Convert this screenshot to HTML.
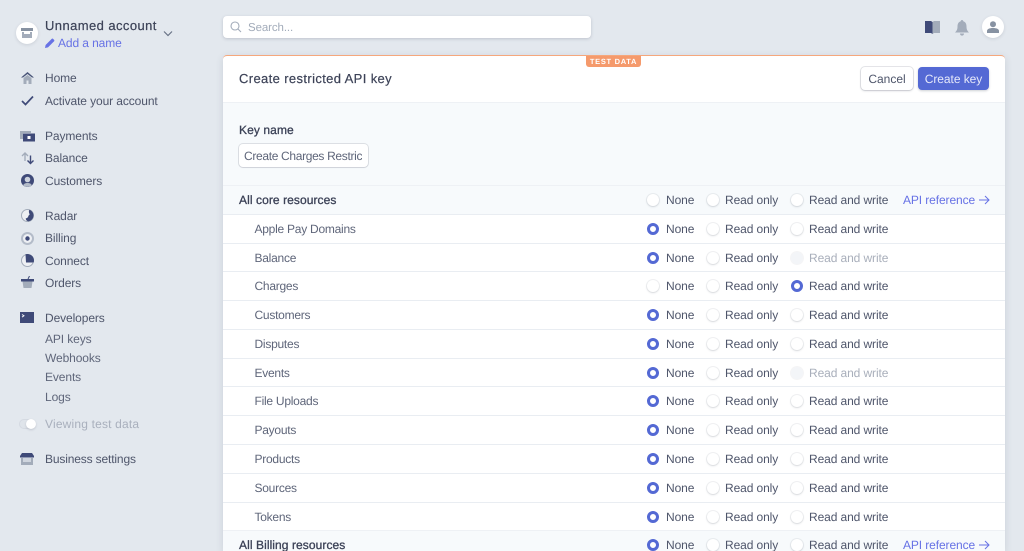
<!DOCTYPE html>
<html lang="en"><head><meta charset="utf-8"><title>Create restricted API key</title>
<style>
*{box-sizing:border-box}
html,body{margin:0;width:1024px;height:551px;overflow:hidden;background:#e3e8ee;font-family:"Liberation Sans",sans-serif;color:#4f566b}
#page{position:relative;width:1024px;height:551px;overflow:hidden;background:#e3e8ee;text-rendering:geometricPrecision}
.t{position:absolute;white-space:nowrap;font-size:12px;line-height:16px;letter-spacing:-.1px}
.nav{color:#4f566b;left:45px}
.sub{color:#5f667a;left:45px}
svg{position:absolute;display:block}
#card{position:absolute;left:223px;top:55px;width:782px;height:496px;background:#fff;border-top:1px solid #f5a77c;border-radius:4px 4px 0 0;box-shadow:0 2px 8px rgba(60,66,87,.14)}
.row{position:absolute;left:0;width:782px;height:29px;border-top:1px solid #e9edf2;background:#fff}
.row.h{background:#f7fafc;border-top:1px solid #eef1f5}
.row .t{top:6px}
.l{left:31.500px;color:#5f667a;letter-spacing:-.25px}
.row.h .l{left:16px;color:#3c4257;-webkit-text-stroke:.3px #3c4257;letter-spacing:.08px}
.x{left:443px}.y{left:502px}.z{left:586px}
.row i{position:absolute;top:8px;width:12px;height:12px;border-radius:50%;background:#fff;box-shadow:0 0 0 1px rgba(60,66,87,.07),0 1px 2px rgba(60,66,87,.14)}
.a{left:424px}.b{left:484px}.c{left:568px}
.row i.on{background:#fff;border:3.500px solid #5469d4;box-shadow:none}
.row i.off{background:#f3f5f8;box-shadow:0 0 0 1px rgba(60,66,87,.05)}
.dis{color:#a9afbb}
.ref{left:680px;color:#6772e5}
.row svg{left:756px;top:9px}
.lab{-webkit-text-stroke:.3px #3c4257;letter-spacing:.1px}
</style></head><body><div id="page">

<!-- account -->
<div style="position:absolute;left:16px;top:22px;width:22px;height:22px;border-radius:50%;background:#fff;box-shadow:0 1px 3px rgba(60,66,87,.15)"></div>
<svg style="left:21px;top:27px" width="12" height="12" viewBox="0 0 12 12"><path d="M0 1h12v3H0z" fill="#8792a2"/><path d="M1 5h10v6H1z" fill="#a3acba"/><path d="M3 5h6v2H3z" fill="#fff"/></svg>
<div class="t" style="left:45px;top:18px;font-size:13px;color:#3c4257;letter-spacing:.42px;-webkit-text-stroke:.2px #3c4257">Unnamed account</div>
<svg style="left:45px;top:38px" width="10" height="10" viewBox="0 0 10 10"><path d="M0 10l.6-3L6.700.9a1 1 0 0 1 1.400 0l1 1a1 1 0 0 1 0 1.400L3 9.400z" fill="#6772e5"/></svg>
<div class="t" style="left:58px;top:35px;color:#6772e5">Add a name</div>
<svg style="left:163px;top:30px" width="10" height="8" viewBox="0 0 10 8"><path d="M1 1.500l4 4 4-4" fill="none" stroke="#697386" stroke-width="1.200"/></svg>

<!-- nav -->
<svg style="left:21px;top:72px" width="13" height="12" viewBox="0 0 13 12"><path d="M6.500 0L13 5.500H11L6.500 2 2 5.500H0z" fill="#4a5578"/><path d="M2.500 6L6.500 3l4 3v6h-3V8.500h-2V12h-3z" fill="#a3acba"/></svg>
<div class="t nav" style="top:70px">Home</div>
<svg style="left:21px;top:95px" width="13" height="11" viewBox="0 0 13 11"><path d="M1 6l3.500 3.500L12 1.500" fill="none" stroke="#3f4a78" stroke-width="1.700"/></svg>
<div class="t nav" style="top:93px">Activate your account</div>

<svg style="left:20px;top:131px" width="15" height="11" viewBox="0 0 15 11"><path d="M0 0h11v2H3v6H0z" fill="#a3acba"/><path d="M3 2.500h12V10.500H3z" fill="#3f4a78"/><path d="M7.500 5h3v3h-3z" fill="#fff"/></svg>
<div class="t nav" style="top:128px">Payments</div>
<svg style="left:21px;top:152px" width="14" height="13" viewBox="0 0 14 13"><path d="M4 9V1M1 4l3-3 3 3" fill="none" stroke="#a3acba" stroke-width="1.400"/><path d="M9.500 3.500v8M6.500 8.500l3 3 3-3" fill="none" stroke="#3f4a78" stroke-width="1.400"/></svg>
<div class="t nav" style="top:150px">Balance</div>
<svg style="left:21px;top:174px" width="13" height="13" viewBox="0 0 13 13"><circle cx="6.500" cy="6.500" r="6.500" fill="#3f4a78"/><path d="M2.200 11.300C3 9.500 4.600 9 6.500 9s3.500.5 4.300 2.300A6.500 6.500 0 0 1 2.200 11.300z" fill="#b4bcc9"/><circle cx="6.500" cy="5.500" r="2.800" fill="#cdd3dd"/></svg>
<div class="t nav" style="top:173px">Customers</div>

<svg style="left:21px;top:209px" width="13" height="13" viewBox="0 0 13 13"><circle cx="6.500" cy="6.500" r="6" fill="#eef0f4" stroke="#a3acba" stroke-width="1"/><path d="M8.500 .8A6 6 0 0 1 8 12.300C6.200 12.500 4.600 11 4.800 9.300 7.500 9.500 7 6 8.800 5.500 7.800 4 7.500 2 8.500 .8z" fill="#3f4a78"/></svg>
<div class="t nav" style="top:208px">Radar</div>
<svg style="left:21px;top:232px" width="13" height="13" viewBox="0 0 13 13"><circle cx="6.500" cy="6.500" r="6.500" fill="#b4bcc9"/><circle cx="6.500" cy="6.500" r="4.500" fill="#eef0f4"/><circle cx="6.500" cy="6.500" r="2.200" fill="#3f4a78"/></svg>
<div class="t nav" style="top:230px">Billing</div>
<svg style="left:21px;top:254px" width="13" height="13" viewBox="0 0 13 13"><circle cx="6.500" cy="6.500" r="6" fill="#eef0f4" stroke="#a3acba"/><path d="M4.500 .3A6.500 6.500 0 0 1 13 6.500C13 7.500 12.800 8 12.500 8.500H5z" fill="#3f4a78"/></svg>
<div class="t nav" style="top:253px">Connect</div>
<svg style="left:21px;top:276px" width="13" height="12" viewBox="0 0 13 12"><path d="M0 3h13v2.500H0z" fill="#3f4a78"/><path d="M1.500 5.500h10L10.500 12h-8z" fill="#a3acba"/><path d="M7 3l1.500-3" stroke="#3f4a78" stroke-width="1"/></svg>
<div class="t nav" style="top:275px">Orders</div>

<svg style="left:20px;top:312px" width="14" height="11" viewBox="0 0 14 11"><path d="M0 0h14v11H0z" fill="#3f4a78"/><path d="M2 2.500l2 1.300-2 1.300" fill="none" stroke="#fff" stroke-width=".9"/></svg>
<div class="t nav" style="top:310px">Developers</div>
<div class="t sub" style="top:331px">API keys</div>
<div class="t sub" style="top:350px">Webhooks</div>
<div class="t sub" style="top:369px">Events</div>
<div class="t sub" style="top:389px">Logs</div>

<div style="position:absolute;left:19px;top:419px;width:17px;height:10px;border-radius:5px;background:#dfe4ea;box-shadow:inset 0 0 0 1px #d5dae2"></div>
<div style="position:absolute;left:26px;top:419px;width:10px;height:10px;border-radius:50%;background:#fff;box-shadow:0 1px 2px rgba(60,66,87,.2)"></div>
<div class="t" style="left:45px;top:416px;color:#a9b0bd;letter-spacing:.18px">Viewing test data</div>

<svg style="left:20px;top:453px" width="14" height="12" viewBox="0 0 14 12"><path d="M2 0h10l2 3v1.500H0V3z" fill="#3f4a78"/><path d="M1 5h12v7H1z" fill="#a3acba"/><path d="M3 5h8v4H3z" fill="#cfd5de"/></svg>
<div class="t nav" style="top:451px;letter-spacing:-.15px">Business settings</div>

<!-- search -->
<div style="position:absolute;left:223px;top:16px;width:368px;height:22px;background:#fff;border-radius:4px;box-shadow:0 1px 3px rgba(60,66,87,.22)"></div>
<svg style="left:230px;top:21px" width="12" height="12" viewBox="0 0 12 12"><circle cx="5" cy="5" r="4" fill="none" stroke="#a3acba" stroke-width="1.100"/><path d="M8 8l3 3" stroke="#a3acba" stroke-width="1.100"/></svg>
<div class="t" style="left:248px;top:20px;color:#a3acba;font-size:11.500px">Search...</div>

<!-- top icons -->
<svg style="left:925px;top:21px" width="15" height="13" viewBox="0 0 15 13"><path d="M0 0h6l1.500 1v12L6 12H0z" fill="#3f4a78"/><path d="M15 0H9L7.500 1v12L9 12h6z" fill="#a3acba"/></svg>
<svg style="left:955px;top:20px" width="14" height="16" viewBox="0 0 14 16"><path d="M7 0c.8 0 1.200.5 1.300 1.300C10.500 2 11.500 4 11.500 6.500c0 3 .8 4.300 2.500 6H0c1.700-1.700 2.500-3 2.500-6C2.500 4 3.500 2 5.700 1.300 5.800.5 6.200 0 7 0z" fill="#a3acba"/><path d="M5 13.500h4C9 15 8 15.600 7 15.600S5 15 5 13.500z" fill="#a3acba"/></svg>
<div style="position:absolute;left:982px;top:16px;width:22px;height:22px;border-radius:50%;background:#fff;box-shadow:0 1px 3px rgba(60,66,87,.15)"></div>
<svg style="left:987px;top:21px" width="12" height="12" viewBox="0 0 12 12"><circle cx="6" cy="3.200" r="3" fill="#8792a2"/><path d="M0 12v-2c0-2 2.500-3 6-3s6 1 6 3v2z" fill="#8792a2"/></svg>

<!-- card -->
<div id="card">
  <div style="position:absolute;left:363px;top:0;width:55px;height:11px;background:#f59a6c;border-radius:0 0 3px 3px;color:#fff;font-size:7.500px;font-weight:bold;line-height:11px;text-align:center;letter-spacing:.7px">TEST DATA</div>
  <div class="t" style="left:16px;top:15px;font-size:13px;color:#3c4257;letter-spacing:.37px;-webkit-text-stroke:.2px #3c4257">Create restricted API key</div>
  <div style="position:absolute;left:638px;top:11px;width:52px;height:23px;background:#fff;border-radius:4px;box-shadow:0 0 0 1px rgba(60,66,87,.12),0 1px 2px rgba(60,66,87,.2);color:#4f566b;font-size:12px;line-height:24px;text-align:center;letter-spacing:0">Cancel</div>
  <div style="position:absolute;left:695px;top:11px;width:71px;height:23px;background:#5469d4;border-radius:4px;box-shadow:0 1px 2px rgba(60,66,87,.25);font-size:12px;line-height:24px;text-align:center;letter-spacing:-.05px;color:#e6e9fa">Create key</div>

  <div style="position:absolute;left:0;top:46px;width:782px;height:84px;background:#f7fafc;border-top:1px solid #eef1f5"></div>
  <div class="t lab" style="left:16px;top:66px;color:#3c4257">Key name</div>
  <div style="position:absolute;left:16px;top:88px;width:129px;height:23px;background:#fff;border-radius:4px;box-shadow:0 0 0 1px rgba(60,66,87,.14),0 1px 1px rgba(60,66,87,.08)"><div class="t" style="left:5px;top:4px;width:118px;overflow:hidden;color:#5f667a;letter-spacing:-.33px">Create Charges Restric</div></div>

  <div class="row h" style="top:129px"><span class="t l">All core resources</span><i class="a"></i><span class="t x">None</span><i class="b"></i><span class="t y">Read only</span><i class="c"></i><span class="t z">Read and write</span><span class="t ref">API reference</span><svg width="11" height="10" viewBox="0 0 11 10"><path d="M0 5h10M6 1l4 4-4 4" fill="none" stroke="#6772e5" stroke-width="1"/></svg></div>
  <div class="row" style="top:158px"><span class="t l">Apple Pay Domains</span><i class="a on"></i><span class="t x">None</span><i class="b"></i><span class="t y">Read only</span><i class="c"></i><span class="t z">Read and write</span></div>
  <div class="row" style="top:186.600px"><span class="t l">Balance</span><i class="a on"></i><span class="t x">None</span><i class="b"></i><span class="t y">Read only</span><i class="c off"></i><span class="t z dis">Read and write</span></div>
  <div class="row" style="top:215.300px"><span class="t l">Charges</span><i class="a"></i><span class="t x">None</span><i class="b"></i><span class="t y">Read only</span><i class="c on"></i><span class="t z">Read and write</span></div>
  <div class="row" style="top:244.200px"><span class="t l">Customers</span><i class="a on"></i><span class="t x">None</span><i class="b"></i><span class="t y">Read only</span><i class="c"></i><span class="t z">Read and write</span></div>
  <div class="row" style="top:273.100px"><span class="t l">Disputes</span><i class="a on"></i><span class="t x">None</span><i class="b"></i><span class="t y">Read only</span><i class="c"></i><span class="t z">Read and write</span></div>
  <div class="row" style="top:301.800px"><span class="t l">Events</span><i class="a on"></i><span class="t x">None</span><i class="b"></i><span class="t y">Read only</span><i class="c off"></i><span class="t z dis">Read and write</span></div>
  <div class="row" style="top:330.400px"><span class="t l">File Uploads</span><i class="a on"></i><span class="t x">None</span><i class="b"></i><span class="t y">Read only</span><i class="c"></i><span class="t z">Read and write</span></div>
  <div class="row" style="top:359.400px"><span class="t l">Payouts</span><i class="a on"></i><span class="t x">None</span><i class="b"></i><span class="t y">Read only</span><i class="c"></i><span class="t z">Read and write</span></div>
  <div class="row" style="top:388.200px"><span class="t l">Products</span><i class="a on"></i><span class="t x">None</span><i class="b"></i><span class="t y">Read only</span><i class="c"></i><span class="t z">Read and write</span></div>
  <div class="row" style="top:416.900px"><span class="t l">Sources</span><i class="a on"></i><span class="t x">None</span><i class="b"></i><span class="t y">Read only</span><i class="c"></i><span class="t z">Read and write</span></div>
  <div class="row" style="top:445.700px"><span class="t l">Tokens</span><i class="a on"></i><span class="t x">None</span><i class="b"></i><span class="t y">Read only</span><i class="c"></i><span class="t z">Read and write</span></div>
  <div class="row h" style="top:474.300px"><span class="t l">All Billing resources</span><i class="a on"></i><span class="t x">None</span><i class="b"></i><span class="t y">Read only</span><i class="c"></i><span class="t z">Read and write</span><span class="t ref">API reference</span><svg width="11" height="10" viewBox="0 0 11 10"><path d="M0 5h10M6 1l4 4-4 4" fill="none" stroke="#6772e5" stroke-width="1"/></svg></div>
</div>
</div></body></html>
